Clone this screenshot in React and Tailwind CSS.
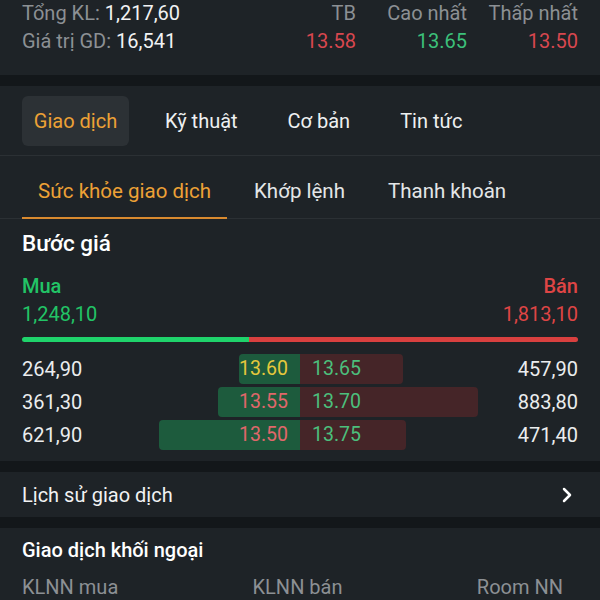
import { ChevronRight } from 'lucide-react';

const stats = [
  { label: 'TB', value: '13.58', color: 'text-[#d8474f]' },
  { label: 'Cao nhất', value: '13.65', color: 'text-[#3cc07a]' },
  { label: 'Thấp nhất', value: '13.50', color: 'text-[#d8474f]' },
];

const tabs = ['Giao dịch', 'Kỹ thuật', 'Cơ bản', 'Tin tức'];
const subTabs = ['Sức khỏe giao dịch', 'Khớp lệnh', 'Thanh khoản'];

const steps = [
  { buyVol: '264,90', buyPrice: '13.60', buyColor: 'text-[#e5c83c]', buyW: 61, sellPrice: '13.65', sellW: 103, sellVol: '457,90' },
  { buyVol: '361,30', buyPrice: '13.55', buyColor: 'text-[#e0676b]', buyW: 82, sellPrice: '13.70', sellW: 178, sellVol: '883,80' },
  { buyVol: '621,90', buyPrice: '13.50', buyColor: 'text-[#e0676b]', buyW: 141, sellPrice: '13.75', sellW: 106, sellVol: '471,40' },
];

function Band() {
  return <div className="h-[11px] bg-[#13171a]" />;
}

export default function App() {
  return (
    <div className="w-[600px] h-[600px] overflow-hidden bg-[#1e2327] text-[#f1f2f3] font-['Roboto',sans-serif]">
      {/* Summary */}
      <div className="flex px-[22px] h-[75px] text-[20px]">
        <div className="flex-1">
          <div className="h-[26px] flex items-center">
            <span className="text-[#8c9094]">Tổng KL:</span>
            <span className="ml-[5px]">1,217,60</span>
          </div>
          <div className="h-[30px] flex items-center">
            <span className="text-[#8c9094]">Giá trị GD:</span>
            <span className="ml-[5px]">16,541</span>
          </div>
        </div>
        <div className="flex">
          {stats.map((s) => (
            <div key={s.label} className="w-[111px] text-right">
              <div className="h-[26px] flex items-center justify-end text-[#8c9094]">{s.label}</div>
              <div className={`h-[30px] flex items-center justify-end ${s.color}`}>{s.value}</div>
            </div>
          ))}
        </div>
      </div>
      <Band />

      {/* Main tabs */}
      <div className="flex items-center gap-[22px] px-[22px] h-[70px] border-b border-[#2b3034] text-[20px]">
        {tabs.map((t, i) =>
          i === 0 ? (
            <div key={t} className="w-[107px] h-[50px] flex items-center justify-center rounded-md bg-[#2c3135] text-[#eda136]">
              {t}
            </div>
          ) : (
            <div key={t} className="h-[50px] flex items-center px-[14px] text-[#eef0f1]">
              {t}
            </div>
          )
        )}
      </div>

      {/* Sub tabs */}
      <div className="flex gap-[11px] px-[22px] h-[63px] border-b border-[#2b3034] text-[20.5px]">
        {subTabs.map((t, i) =>
          i === 0 ? (
            <div key={t} className="w-[205px] pt-[10px] flex items-center justify-center text-[#eda136] border-b-2 border-[#d98a2f] -mb-px">
              {t}
            </div>
          ) : (
            <div key={t} className="px-4 pt-[10px] pb-[2px] flex items-center text-[#e4e6e8]">
              {t}
            </div>
          )
        )}
      </div>

      {/* Price steps */}
      <div className="px-[22px] pb-[19px]">
        <div className="h-[49px] flex items-center text-[22.5px] font-medium text-white">Bước giá</div>
        <div className="mt-[4px] flex justify-between text-[20px]">
          <div className="text-[#22c466]">
            <div className="h-[28px] flex items-center font-medium">Mua</div>
            <div className="h-[28px] flex items-center">1,248,10</div>
          </div>
          <div className="text-[#de4545] text-right">
            <div className="h-[28px] flex items-center justify-end font-medium">Bán</div>
            <div className="h-[28px] flex items-center justify-end">1,813,10</div>
          </div>
        </div>
        <div className="mt-[9px] h-[5px] flex rounded-full overflow-hidden">
          <div className="w-[40.8%] bg-[#1fd36b]" />
          <div className="flex-1 bg-[#d9403f]" />
        </div>
        <div className="mt-[12px] flex flex-col gap-[11px] text-[20px] text-[#ebedee]">
          {steps.map((r) => (
            <div key={r.buyPrice} className="grid grid-cols-2 h-[22px]">
              <div className="flex items-center justify-between">
                <span>{r.buyVol}</span>
                <div
                  className={`h-full flex items-center justify-end pr-3 bg-[#1d5b3d] rounded-l-sm text-[19.5px] ${r.buyColor}`}
                  style={{ width: r.buyW }}
                >
                  {r.buyPrice}
                </div>
              </div>
              <div className="flex items-center justify-between">
                <div
                  className="h-full flex items-center pl-3 bg-[#452528] rounded-r-sm text-[19.5px] text-[#4cbf7c]"
                  style={{ width: r.sellW }}
                >
                  {r.sellPrice}
                </div>
                <span>{r.sellVol}</span>
              </div>
            </div>
          ))}
        </div>
      </div>
      <Band />

      {/* History link */}
      <div className="h-[45px] flex items-center justify-between pl-[22px] pr-[21px] text-[20px]">
        <span>Lịch sử giao dịch</span>
        <ChevronRight className="w-[24px] h-[24px] text-white" strokeWidth={2.5} />
      </div>
      <Band />

      {/* Foreign trading */}
      <div className="px-[22px]">
        <div className="h-[44px] flex items-center text-[20px] font-medium text-white">Giao dịch khối ngoại</div>
        <div className="h-[30px] flex items-center justify-between pr-[15px] text-[20px] text-[#8c9094]">
          <span>KLNN mua</span>
          <span>KLNN bán</span>
          <span>Room NN</span>
        </div>
      </div>
    </div>
  );
}
